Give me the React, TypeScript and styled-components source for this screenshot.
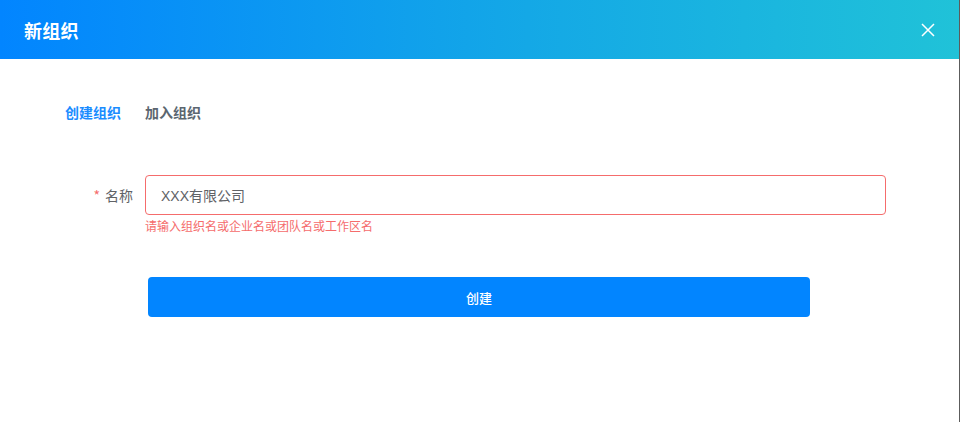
import React from "react";
import styled, { createGlobalStyle } from "styled-components";

const GlobalStyle = createGlobalStyle`
  html, body {
    margin: 0;
    padding: 0;
    background: #fff;
  }
  * {
    box-sizing: border-box;
  }
  body {
    font-family: "Noto Sans CJK SC", "Noto Sans", "Liberation Sans", sans-serif;
  }
`;

const Dialog = styled.div`
  width: 960px;
  height: 422px;
  border-right: 1px solid #5c5c5c;
  background: #fff;
  display: flex;
  flex-direction: column;
`;

const Header = styled.div`
  height: 59px;
  flex-shrink: 0;
  display: flex;
  align-items: center;
  justify-content: space-between;
  padding: 0 24px 0 24px;
  background: linear-gradient(90deg, #0285ff 0%, #14a8e6 55%, #20c2d8 100%);
`;

const Title = styled.div`
  color: #fff;
  font-size: 18px;
  font-weight: 700;
  letter-spacing: 0.2px;
`;

const CloseButton = styled.button`
  border: none;
  background: transparent;
  padding: 0;
  width: 14px;
  height: 14px;
  display: flex;
  align-items: center;
  justify-content: center;
  cursor: pointer;
`;

const Body = styled.div`
  padding: 43px 0 0 65px;
  display: flex;
  flex-direction: column;
`;

const Tabs = styled.div`
  display: flex;
  gap: 24px;
  height: 20px;
  align-items: center;
`;

const Tab = styled.div<{ $active?: boolean }>`
  font-size: 14px;
  font-weight: 700;
  color: ${(p) => (p.$active ? "#1a8cff" : "#5b6670")};
  cursor: pointer;
`;

const Form = styled.div`
  margin-top: 53px;
  margin-left: -65px;
  display: flex;
  flex-direction: column;
`;

const Row = styled.div`
  display: flex;
  align-items: flex-start;
`;

const Label = styled.label`
  width: 145px;
  padding-right: 12px;
  height: 40px;
  display: flex;
  align-items: center;
  justify-content: flex-end;
  font-size: 14px;
  color: #606266;
`;

const Required = styled.span`
  color: #f56c6c;
  margin-right: 5px;
`;

const Field = styled.div`
  display: flex;
  flex-direction: column;
`;

const Input = styled.input`
  width: 741px;
  height: 40px;
  border: 1px solid #f56c6c;
  border-radius: 4px;
  padding: 0 15px;
  font-size: 14px;
  font-family: "Liberation Sans", "Noto Sans CJK SC", sans-serif;
  color: #606266;
  outline: none;
`;

const ErrorText = styled.div`
  font-size: 12px;
  line-height: 12px;
  color: #f56c6c;
  margin-top: 5px;
`;

const SubmitButton = styled.button`
  margin: 45px 0 0 148px;
  width: 662px;
  height: 40px;
  border: none;
  border-radius: 4px;
  background: #0285ff;
  color: #fff;
  font-size: 13px;
  font-weight: 500;
  font-family: inherit;
  cursor: pointer;
`;

export default function App() {
  return (
    <>
      <GlobalStyle />
      <Dialog>
        <Header>
          <Title>新组织</Title>
          <CloseButton aria-label="关闭">
            <svg width="14" height="14" viewBox="0 0 14 14">
              <path d="M1 1L13 13M13 1L1 13" stroke="#fff" strokeWidth="1.5" />
            </svg>
          </CloseButton>
        </Header>
        <Body>
          <Tabs>
            <Tab $active>创建组织</Tab>
            <Tab>加入组织</Tab>
          </Tabs>
          <Form>
            <Row>
              <Label>
                <Required>*</Required>名称
              </Label>
              <Field>
                <Input defaultValue="XXX有限公司" />
                <ErrorText>请输入组织名或企业名或团队名或工作区名</ErrorText>
              </Field>
            </Row>
            <SubmitButton>创建</SubmitButton>
          </Form>
        </Body>
      </Dialog>
    </>
  );
}
